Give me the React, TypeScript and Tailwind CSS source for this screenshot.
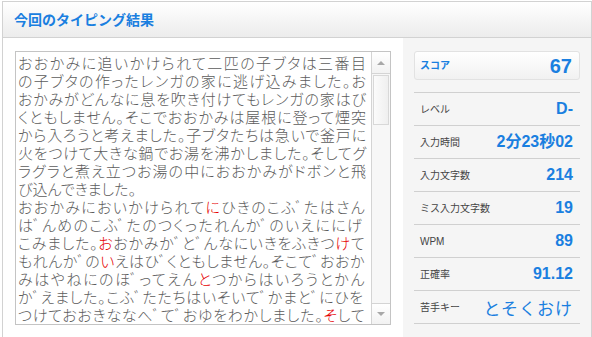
import React from "react";

type Part = { t: string; red?: boolean };
type Line = { parts: Part[]; full?: boolean };

const L = (t: string, full = true): Line => ({ parts: [{ t }], full });

const lines: Line[] = [
  L("おおかみに追いかけられて二匹の子ブタは三番目"),
  L("の子ブタの作ったレンガの家に逃げ込みました。お"),
  L("おかみがどんなに息を吹き付けてもレンガの家はび"),
  L("くともしません。そこでおおかみは屋根に登って煙突"),
  L("から入ろうと考えました。子ブタたちは急いで釜戸に"),
  L("火をつけて大きな鍋でお湯を沸かしました。そしてグ"),
  L("ラグラと煮え立つお湯の中におおかみがドボンと飛"),
  L("び込んできました。", false),
  {
    full: true,
    parts: [{ t: "おおかみにおいかけられて" }, { t: "に", red: true }, { t: "ひきのこふﾞたはさん" }],
  },
  L("はﾞんめのこふﾞたのつくったれんかﾞのいえににげ"),
  {
    full: true,
    parts: [
      { t: "こみました。" },
      { t: "お", red: true },
      { t: "おかみかﾞとﾞんなにいきをふきつ" },
      { t: "け", red: true },
      { t: "て" },
    ],
  },
  {
    full: true,
    parts: [{ t: "もれんかﾞの" }, { t: "い", red: true }, { t: "えはひﾞくともしません。そこてﾞおおか" }],
  },
  {
    full: true,
    parts: [{ t: "みはやねにのほﾞってえん" }, { t: "と", red: true }, { t: "つからはいろうとかん" }],
  },
  L("かﾞえました。こふﾞたたちはいそいてﾞかまとﾞにひを"),
  {
    full: true,
    parts: [{ t: "つけておおきななへﾞてﾞおゆをわかしました。" }, { t: "そ", red: true }, { t: "して" }],
  },
];

const stats = [
  { label: "レベル", value: "D-" },
  { label: "入力時間", value: "2分23秒02" },
  { label: "入力文字数", value: "214" },
  { label: "ミス入力文字数", value: "19" },
  { label: "WPM", value: "89" },
  { label: "正確率", value: "91.12" },
];

const App: React.FC = () => {
  return (
    <div
      className="w-[592px] h-[337px] overflow-hidden bg-white pt-[1px] pl-[2px]"
      style={{ fontFamily: '"Liberation Sans", "Noto Sans CJK JP", sans-serif' }}
    >
      <div className="border border-[#d2d2d2] h-[360px] flex flex-col">
        {/* Header */}
        <div className="h-[36px] shrink-0 border-b border-[#d2d2d2] bg-gradient-to-b from-white to-[#ececec] flex items-center pl-[11px]">
          <h1 className="text-[14px] font-bold text-[#1a7fe0] leading-none">今回のタイピング結果</h1>
        </div>

        <div className="flex flex-1">
          {/* Text box */}
          <div className="pl-[12px] pt-[13px] pr-[12px]">
            <div className="w-[376px] h-[274px] border border-[#c4c4c4] flex">
              <div
                className="w-[352px] overflow-hidden pl-[2px] pr-[2px] pt-[2px] text-[15px] font-light leading-[18px] text-[#5c5c5c] [font-feature-settings:'palt']"
                style={{ fontFamily: '"Noto Sans CJK JP", sans-serif' }}
              >
                {lines.map((ln, i) => (
                  <div
                    key={i}
                    className={
                      ln.full
                        ? "whitespace-nowrap text-justify [text-align-last:justify]"
                        : "whitespace-nowrap"
                    }
                  >
                    {ln.parts.map((p, j) =>
                      p.red ? (
                        <span key={j} className="text-[#e60000]">
                          {p.t}
                        </span>
                      ) : (
                        <span key={j}>{p.t}</span>
                      )
                    )}
                  </div>
                ))}
              </div>
              <div className="flex-1" />
              {/* Scrollbar */}
              <div className="w-[19px] border-l border-[#d4d4d4] bg-[#f7f7f7] flex flex-col">
                <div className="h-[22px] border-b border-[#d4d4d4] bg-gradient-to-b from-white to-[#f2f2f2] flex items-center justify-center">
                  <svg width="8" height="5" viewBox="0 0 8 5">
                    <path d="M0 5 L4 1 L8 5 Z" fill="#a8a8a8" />
                  </svg>
                </div>
                <div className="h-[50px] mx-[1px] mt-[1px] border border-[#d8d8d8] bg-gradient-to-r from-[#fbfbfb] to-[#efefef]" />
                <div className="flex-1" />
                <div className="h-[21px] border-t border-[#d4d4d4] bg-gradient-to-b from-white to-[#f2f2f2] flex items-center justify-center">
                  <svg width="8" height="5" viewBox="0 0 8 5">
                    <path d="M0 0 L4 4 L8 0 Z" fill="#a8a8a8" />
                  </svg>
                </div>
              </div>
            </div>
          </div>

          {/* Stats column */}
          <div className="w-[188px] bg-[#f5f5f5] pt-[13px] px-[11px]">
            <div className="h-[29px] rounded-[3px] border border-[#e2e2e2] bg-gradient-to-b from-white to-[#f1f1f1] flex items-center justify-between pl-[5px] pr-[7px]">
              <span className="text-[10px] font-bold text-[#1a7fe0]">スコア</span>
              <span className="text-[20px] font-bold text-[#1a7fe0] leading-none">67</span>
            </div>
            <div className="mt-[12px] border-b border-[#d0d0d0]">
              {stats.map((s) => (
                <div
                  key={s.label}
                  className="h-[33px] border-t border-[#d0d0d0] flex items-center justify-between pl-[6px] pr-[7px]"
                >
                  <span className="text-[10px] text-[#444]">{s.label}</span>
                  <span className="text-[16px] font-bold text-[#1a7fe0] leading-none">{s.value}</span>
                </div>
              ))}
              <div className="h-[33px] border-t border-[#d0d0d0] flex items-center justify-between pl-[6px] pr-[7px]">
                <span className="text-[10px] text-[#444]">苦手キー</span>
                <span
                  className="text-[17px] text-[#1a7fe0] leading-none tracking-[1px]"
                  style={{ fontFamily: '"Noto Sans CJK JP", sans-serif' }}
                >
                  とそくおけ
                </span>
              </div>
            </div>
          </div>
        </div>
      </div>
    </div>
  );
};

export default App;
